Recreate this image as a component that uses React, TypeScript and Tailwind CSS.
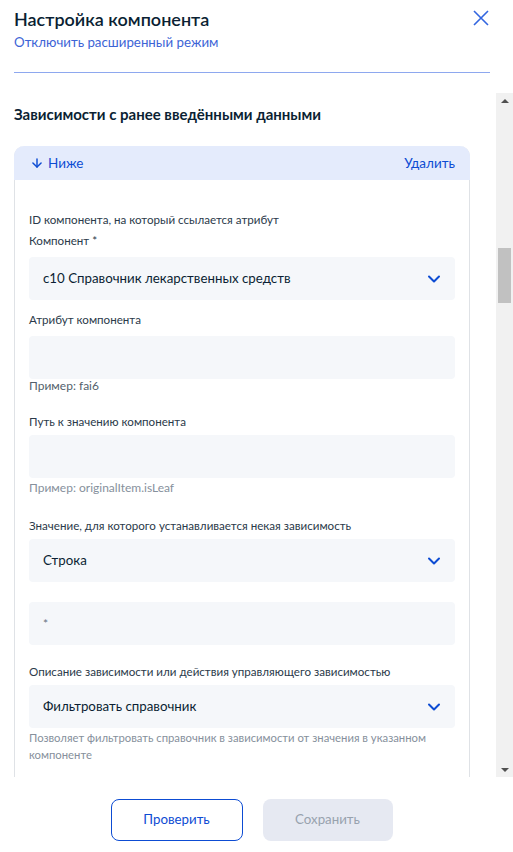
import { ArrowDown, ChevronDown } from 'lucide-react';

const font = { fontFamily: 'Lato, "Noto Sans", sans-serif' };

function Label({ text, className = '' }: { text: string; className?: string }) {
  return <div className={`text-[11.6px] leading-[16px] text-[#2b3a4a] ${className}`}>{text}</div>;
}

function SelectBox({ value, className = '' }: { value: string; className?: string }) {
  return (
    <div className={`h-[43px] rounded-[4px] bg-[#f5f7fa] flex items-center pl-[14px] pr-[11px] ${className}`}>
      <span className="flex-1 text-[13.3px] text-[#0b1f33]">{value}</span>
      <ChevronDown size={20} strokeWidth={2.4} className="text-[#0d4cd3]" />
    </div>
  );
}

function InputBox({ placeholder = '', className = '' }: { placeholder?: string; className?: string }) {
  return (
    <div className={`h-[43px] rounded-[4px] bg-[#f5f7fa] flex items-center pl-[14px] ${className}`}>
      <span className="text-[12px] text-[#66727f]">{placeholder}</span>
    </div>
  );
}

function Scrollbar() {
  return (
    <div className="w-[17px] h-full bg-[#f1f1f1] flex flex-col items-center">
      <div className="h-[15px] w-full flex items-center justify-center">
        <div className="w-0 h-0 border-l-[4px] border-r-[4px] border-b-[4px] border-l-transparent border-r-transparent border-b-[#505050]" />
      </div>
      <div className="mt-[140px] w-[13px] h-[55px] bg-[#c1c1c1]" />
      <div className="flex-1" />
      <div className="h-[15px] w-full flex items-center justify-center">
        <div className="w-0 h-0 border-l-[4px] border-r-[4px] border-t-[4px] border-l-transparent border-r-transparent border-t-[#505050]" />
      </div>
    </div>
  );
}

export default function App() {
  return (
    <div className="w-[513px] h-[852px] bg-white flex flex-col overflow-hidden" style={font}>
      {/* Шапка */}
      <div className="px-[14px] pt-[7px]">
        <div className="w-[476px] flex items-start justify-between">
          <h1 className="text-[18px] leading-[24px] font-semibold text-[#0b1f33]">Настройка компонента</h1>
          <svg width="16" height="16" viewBox="0 0 16 16" className="mt-[3px] mr-[1px]">
            <path d="M1 1 L15 15 M15 1 L1 15" stroke="#3366e0" strokeWidth="1.6" fill="none" />
          </svg>
        </div>
        <div className="text-[13.3px] leading-[18px] text-[#3d64d6] mt-[2px]">Отключить расширенный режим</div>
        <div className="mt-[21px] w-[476px] h-px bg-[#8ea8ef]" />
      </div>

      {/* Прокручиваемая область */}
      <div className="mt-[20px] h-[684px] flex">
        <div className="flex-1 overflow-hidden pl-[14px] pr-[26px]">
          <h2 className="mt-[11px] text-[15px] leading-[20px] font-bold text-[#0b1f33]">
            Зависимости с ранее введёнными данными
          </h2>

          <div className="mt-[22px] border-x border-[#dfe2e6] rounded-t-[10px]">
            <div className="h-[34px] bg-[#e4ebfc] rounded-t-[10px] -mx-px flex items-center justify-between pl-[16px] pr-[15px]">
              <div className="flex items-center gap-[4px] text-[13.5px] text-[#0d4cd3]">
                <ArrowDown size={14} strokeWidth={2.5} />
                <span>Ниже</span>
              </div>
              <span className="text-[13.5px] text-[#0d4cd3]">Удалить</span>
            </div>

            <div className="pl-[14px] pr-[14px] pt-[32px] pb-[20px]">
              <Label text="ID компонента, на который ссылается атрибут" />
              <Label text="Компонент *" className="mt-[5px]" />
              <SelectBox value="с10 Справочник лекарственных средств" className="mt-[8px]" />

              <Label text="Атрибут компонента" className="mt-[12px]" />
              <InputBox className="mt-[8px]" />
              <div className="text-[12px] leading-[16px] text-[#535f6c] mt-[-1px]">Пример: fai6</div>

              <Label text="Путь к значению компонента" className="mt-[20px]" />
              <InputBox className="mt-[5px]" />
              <div className="text-[12px] leading-[16px] text-[#86909c] mt-[2px]">Пример: originalItem.isLeaf</div>

              <Label text="Значение, для которого устанавливается некая зависимость" className="mt-[22px]" />
              <SelectBox value="Строка" className="mt-[5px]" />
              <InputBox placeholder="*" className="mt-[20px]" />

              <Label text="Описание зависимости или действия управляющего зависимостью" className="mt-[19px]" />
              <SelectBox value="Фильтровать справочник" className="mt-[5px]" />
              <div className="text-[11.3px] leading-[17px] text-[#86909c] mt-[1px]">
                Позволяет фильтровать справочник в зависимости от значения в указанном компоненте
              </div>
            </div>
          </div>
        </div>
        <Scrollbar />
      </div>

      {/* Кнопки */}
      <div className="mt-[22px] flex justify-center gap-[20px] pr-[10px]">
        <button className="w-[132px] h-[42px] rounded-[8px] border border-[#0d4cd3] text-[13.3px] text-[#0d4cd3]">
          Проверить
        </button>
        <button className="w-[130px] h-[42px] rounded-[8px] bg-[#e6e9f2] text-[13.3px] text-[#98a2ae]">
          Сохранить
        </button>
      </div>
    </div>
  );
}
